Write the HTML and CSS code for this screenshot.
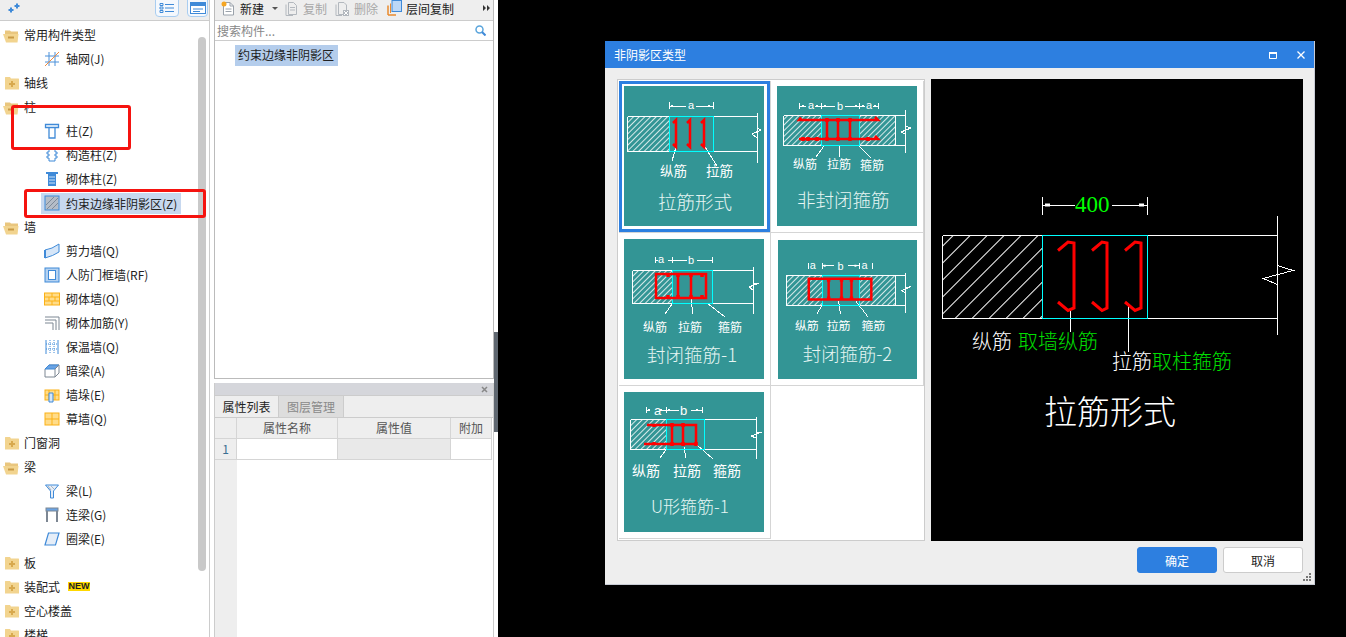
FILE: index.html
```html
<!DOCTYPE html>
<html lang="zh">
<head>
<meta charset="utf-8">
<title>非阴影区类型</title>
<link rel="stylesheet" href="styles.css">
</head>
<body>
<svg class="defs" width="0" height="0" aria-hidden="true">
  <defs>
    <pattern id="hs" width="4" height="4" patternUnits="userSpaceOnUse" patternTransform="rotate(-45)"><line x1="0" y1="0.5" x2="4" y2="0.5" stroke="#fff" stroke-width="0.8"/></pattern>
    <pattern id="hl" width="12" height="12" patternUnits="userSpaceOnUse" patternTransform="rotate(-45)"><line x1="0" y1="0.5" x2="12" y2="0.5" stroke="#fff" stroke-width="1.100"/></pattern>
    <symbol id="fc" viewBox="0 0 16 14"><path d="M1 3V1.500Q1 1 1.500 1H6L7 2.500H14.500Q15 2.500 15 3V13.500H1Z" fill="#f2d48f"/><path d="M8 5V11M5 8H11" stroke="#d8a94e" stroke-width="2"/></symbol>
    <symbol id="fo" viewBox="0 0 17 14"><path d="M2 3V1.500H7L8 2.500H15V5H2Z" fill="#e9c67e"/><path d="M0 5H15.500L14.500 13.500H3Z" fill="#f2d48f"/><path d="M5 8.500H11" stroke="#c99a45" stroke-width="2"/></symbol>
    <symbol id="i-grid" viewBox="0 0 16 16" fill="none"><path d="M1 5H15M1 11H15M5 1V15M11 1V15" stroke="#4a90d9"/><path d="M1 15L15 1" stroke="#f08a3c"/></symbol>
    <symbol id="i-col" viewBox="0 0 16 16" fill="none"><path d="M1.500 1.500H14.500V4.500H1.500ZM5 4.500V15H11V4.500" stroke="#3f8ad8" stroke-width="1.300"/></symbol>
    <symbol id="i-gz" viewBox="0 0 16 16" fill="none"><path d="M5 2H11V5H13V7H11V9H13V11H11V14H5V11H3V9H5V7H3V5H5Z" stroke="#3f8ad8"/></symbol>
    <symbol id="i-qt" viewBox="0 0 16 16"><path d="M2 1H14V3H12V15H4V3H2Z" fill="#3f8ad8"/><path d="M5 6H11M5 9H11M5 12H11" stroke="#cfe2f7"/></symbol>
    <symbol id="i-ys" viewBox="0 0 16 16"><rect x="1" y="1" width="14" height="14" fill="#b5bdc8" stroke="#3f8ad8"/><path d="M2 10L10 2M3 14L14 3M8 14L14 8" stroke="#7e8a99"/></symbol>
    <symbol id="i-jl" viewBox="0 0 16 16"><path d="M1 7Q8 6 15 1V9Q9 13 1 15Z" fill="#d6e6f8" stroke="#3f8ad8"/><path d="M1 7V15" stroke="#3f8ad8" stroke-width="2"/></symbol>
    <symbol id="i-rf" viewBox="0 0 16 16" fill="none"><rect x="1" y="1" width="14" height="14" fill="#b5d2f1" stroke="#3f8ad8"/><rect x="4.500" y="3.500" width="7" height="9" fill="#fff" stroke="#3f8ad8"/></symbol>
    <symbol id="i-brick" viewBox="0 0 16 16"><rect x="0.500" y="2" width="15" height="12" fill="#ffdc8a" stroke="#fbb116"/><path d="M1 6H15M1 10H15M8 2V6M5 6V10M11 6V10M8 10V14" stroke="#fbb116"/></symbol>
    <symbol id="i-jj" viewBox="0 0 16 16" fill="none"><path d="M1 2H15V15M1 5H12V15M1 8H9V15" stroke="#7d8793"/></symbol>
    <symbol id="i-bw" viewBox="0 0 16 16" fill="none"><path d="M2 1V15M14 1V15" stroke="#3f8ad8"/><path d="M6 1V15M10 1V15M2 5H14M2 10H14" stroke="#3f8ad8" stroke-dasharray="1 1"/></symbol>
    <symbol id="i-al" viewBox="0 0 16 16"><path d="M1 6L5 2H15V10L11 14H1Z" fill="#fff" stroke="#7d8793"/><path d="M1 6L5 2H15L11 6Z" fill="#6aa3e3" stroke="#3f8ad8"/><path d="M11 6V14M11 6L15 2" stroke="#7d8793"/></symbol>
    <symbol id="i-qd" viewBox="0 0 16 16"><rect x="1" y="3" width="14" height="10" fill="#ffdc8a" stroke="#fbb116"/><path d="M1 8H15M5 3V13M11 3V13" stroke="#fbb116"/><path d="M5 6H9V15H5Z" fill="#d6e6f8" stroke="#3f8ad8"/></symbol>
    <symbol id="i-mq" viewBox="0 0 16 16"><rect x="1" y="2" width="14" height="12" fill="#ffdc8a" stroke="#fbb116"/><path d="M1 8H15M8 2V14" stroke="#fbb116"/></symbol>
    <symbol id="i-l" viewBox="0 0 16 16"><path d="M1.500 2H14.500L9.500 8V15H6.500V8Z" fill="#e6eef8" stroke="#3f8ad8"/><path d="M4 3L7 7M7 3L10 6" stroke="#a9b3bf"/></symbol>
    <symbol id="i-ll" viewBox="0 0 16 16" fill="none"><rect x="2" y="1" width="12" height="3" fill="#6aa3e3" stroke="#7d8793"/><path d="M3 4V15M13 4V15" stroke="#7d8793" stroke-width="2"/></symbol>
    <symbol id="i-ql" viewBox="0 0 16 16"><path d="M4.500 2H15L11.500 14H1Z" fill="#e6eef8" stroke="#3f8ad8" stroke-width="1.200"/></symbol>
  </defs>
</svg>

<div class="workspace">
  <aside class="sidebar">
    <div class="side-bar-top">
      <svg class="spark" viewBox="0 0 12 10" width="12" height="10"><path d="M0.500 7H5.500M3 4.500V9.500M6.500 3H11.500M9 0.500V5.500" stroke="#3f8ad8" stroke-width="2"/></svg>
      <span class="view-btn"><svg viewBox="0 0 16 12" width="16" height="12" fill="none"><path d="M1 1.500H4V3.500H1ZM1 5H4V7H1ZM1 8.500H4V10.500H1ZM6 2.500H15M6 6H15M6 9.500H15" stroke="#3f8ad8"/></svg></span>
      <span class="view-btn"><svg viewBox="0 0 16 12" width="16" height="12"><rect x="0.500" y="0.500" width="15" height="11" fill="#fff" stroke="#3f8ad8"/><rect x="1" y="1" width="14" height="3" fill="#3f8ad8"/><path d="M3 7H13M3 9.500H10" stroke="#3f8ad8"/></svg></span>
    </div>
    <div class="tree">
      <div class="row"><svg class="folder-open"><use href="#fo"/></svg>常用构件类型</div>
      <div class="row leaf"><svg class="ico"><use href="#i-grid"/></svg>轴网(J)</div>
      <div class="row"><svg class="folder"><use href="#fc"/></svg>轴线</div>
      <div class="row"><svg class="folder-open"><use href="#fo"/></svg>柱</div>
      <div class="row leaf"><svg class="ico"><use href="#i-col"/></svg>柱(Z)</div>
      <div class="row leaf"><svg class="ico"><use href="#i-gz"/></svg>构造柱(Z)</div>
      <div class="row leaf"><svg class="ico"><use href="#i-qt"/></svg>砌体柱(Z)</div>
      <div class="row leaf"><span class="sel-row"><svg class="ico"><use href="#i-ys"/></svg>约束边缘非阴影区(Z)</span></div>
      <div class="row"><svg class="folder-open"><use href="#fo"/></svg>墙</div>
      <div class="row leaf"><svg class="ico"><use href="#i-jl"/></svg>剪力墙(Q)</div>
      <div class="row leaf"><svg class="ico"><use href="#i-rf"/></svg>人防门框墙(RF)</div>
      <div class="row leaf"><svg class="ico"><use href="#i-brick"/></svg>砌体墙(Q)</div>
      <div class="row leaf"><svg class="ico"><use href="#i-jj"/></svg>砌体加筋(Y)</div>
      <div class="row leaf"><svg class="ico"><use href="#i-bw"/></svg>保温墙(Q)</div>
      <div class="row leaf"><svg class="ico"><use href="#i-al"/></svg>暗梁(A)</div>
      <div class="row leaf"><svg class="ico"><use href="#i-qd"/></svg>墙垛(E)</div>
      <div class="row leaf"><svg class="ico"><use href="#i-mq"/></svg>幕墙(Q)</div>
      <div class="row"><svg class="folder"><use href="#fc"/></svg>门窗洞</div>
      <div class="row"><svg class="folder-open"><use href="#fo"/></svg>梁</div>
      <div class="row leaf"><svg class="ico"><use href="#i-l"/></svg>梁(L)</div>
      <div class="row leaf"><svg class="ico"><use href="#i-ll"/></svg>连梁(G)</div>
      <div class="row leaf"><svg class="ico"><use href="#i-ql"/></svg>圈梁(E)</div>
      <div class="row"><svg class="folder"><use href="#fc"/></svg>板</div>
      <div class="row"><svg class="folder"><use href="#fc"/></svg>装配式<span class="new">NEW</span></div>
      <div class="row"><svg class="folder"><use href="#fc"/></svg>空心楼盖</div>
      <div class="row"><svg class="folder"><use href="#fc"/></svg>楼梯</div>
    </div>
    <div class="scrollbar"></div>
    <div class="mark mark-a"></div>
    <div class="mark mark-b"></div>
  </aside>

  <section class="center">
    <div class="upper">
      <div class="toolbar">
        <span class="tool tool-new"><svg viewBox="0 0 14 15" width="14" height="15" fill="none"><path d="M2.500 1.500H9L12.500 5V14H2.500Z" fill="#fff" stroke="#9aa2ab"/><path d="M9 1.500V5H12.500M4.500 8H10.500M4.500 10.500H10.500" stroke="#9aa2ab"/><circle cx="3" cy="3" r="2.500" fill="#f5a623"/></svg>新建<i class="caret"></i></span>
        <span class="tool tool-off tool-copy"><svg viewBox="0 0 14 15" width="14" height="15" fill="none"><path d="M4.500 1.500H9.500L12.500 4.500V13.500H4.500ZM2 3.500V14.500H9M6 6.500H11M6 9H11" stroke="#b3b8be"/></svg>复制</span>
        <span class="tool tool-off tool-del"><svg viewBox="0 0 16 15" width="16" height="15" fill="none"><path d="M4.500 1.500H10L12.500 4V13.500H4.500ZM2 3.500V14.500H8" stroke="#b3b8be"/><rect x="9" y="9" width="6" height="6" fill="#b3b8be"/><path d="M10 10L14 14M14 10L10 14" stroke="#fff"/></svg>删除</span>
        <span class="tool tool-floor"><svg viewBox="0 0 15 16" width="15" height="16"><path d="M1 15V5.500M1 15H9" stroke="#e98a2e" stroke-width="1.500" fill="none"/><path d="M3.500 13V3.500" stroke="#e98a2e" fill="none"/><rect x="5" y="0.500" width="9.500" height="11" fill="#bcd8f7" stroke="#3f8ad8"/></svg>层间复制</span>
        <span class="more"><svg viewBox="0 0 7 6" width="7" height="6"><path d="M0 0L3 3L0 6ZM4 0L7 3L4 6Z" fill="#333"/></svg></span>
      </div>
      <div class="search">搜索构件...<svg viewBox="0 0 11 11" width="11" height="11" fill="none"><circle cx="4.500" cy="4.500" r="3.500" stroke="#5aa5dc" stroke-width="1.500"/><path d="M7 7L10.500 10.500" stroke="#3f8ad8" stroke-width="2"/></svg></div>
      <div class="list"><span class="list-item">约束边缘非阴影区</span></div>
    </div>
    <div class="lower">
      <div class="lower-head"><svg viewBox="0 0 7 7" width="7" height="7"><path d="M1 1L6 6M6 1L1 6" stroke="#888" stroke-width="1.500"/></svg></div>
      <div class="tabs"><span class="tab tab-on">属性列表</span><span class="tab">图层管理</span></div>
      <div class="props">
        <div class="pc ph"></div><div class="pc ph">属性名称</div><div class="pc ph">属性值</div><div class="pc ph">附加</div>
        <div class="pc ph num">1</div><div class="pc"></div><div class="pc pc-grey"></div><div class="pc"></div>
        <div class="gutter"></div>
      </div>
    </div>
  </section>
  <div class="split"><div class="split-grip"></div></div>
</div>

<div class="dialog">
  <header class="dlg-title">
    <span>非阴影区类型</span>
    <svg class="dlg-max" viewBox="0 0 8 7" width="8" height="7" fill="none"><path d="M0.500 1H7.500V6.500H0.500Z" stroke="#fff"/><path d="M0 1H8" stroke="#fff" stroke-width="2"/></svg>
    <svg class="dlg-x" viewBox="0 0 8 8" width="8" height="8"><path d="M0.500 0.500L7.500 7.500M7.500 0.500L0.500 7.500" stroke="#fff" stroke-width="1.300"/></svg>
  </header>
  <div class="dlg-main">
    <div class="types">
      <div class="cell cell-sel">
        <svg class="thumb" viewBox="0 0 140 140">
          <rect x="3.500" y="30.500" width="41.500" height="35" fill="url(#hs)"/>
          <path class="w" d="M3.500 30.500H133M3.500 65.500H133M3.500 30.500V65.500M133 27V77M133 42L137 44L128 48L133 52M45.500 16V23M89.500 16V23M45.500 20H62M72 20H89.500M52 61L48 75M81 61L93 80"/>
          <path class="arrow" d="M47 19H49V21H47ZM84 19H86V21H84Z"/>
          <rect class="cy" x="45.500" y="30.500" width="44" height="35"/>
          <path class="rd" d="M49 37L52 34V61L49 58M63 37L66 34V61L63 58M77 37L80 34V61L77 58"/>
          <text class="dim" x="64" y="23">a</text>
          <text class="lbl lbl-m" x="36" y="90">纵筋</text><text class="lbl lbl-m" x="82" y="90">拉筋</text>
          <text class="ttl" x="34" y="123">拉筋形式</text>
        </svg>
      </div>
      <div class="cell cell-b">
        <svg class="thumb" viewBox="0 0 140 140">
          <rect x="6.500" y="29.500" width="38" height="30" fill="url(#hs)"/><rect x="82" y="29.500" width="36" height="30" fill="url(#hs)"/>
          <path class="w" d="M6.500 29.500H128M6.500 59.500H128M6.500 29.500V59.500M118.500 29.500V59.500M128.500 24V67M128 40L134 42L124 46L128 48M22.500 17V23M44.500 17V23M82.500 17V23M101.500 17V23M22.500 20H29M38 20H44.500M44.500 20H58M68 20H82.500M82.500 20H88M96 20H101.500M47 60L39 71M62 60L63 71M82 60L94 72"/>
          <path class="arrow" d="M25 19H27V21H25ZM39 19H41V21H39ZM47 19H49V21H47ZM78 19H80V21H78ZM85 19H87V21H85ZM97 19H99V21H97Z"/>
          <rect class="cy" x="44.500" y="29.500" width="38" height="30"/>
          <path class="rd" d="M24 31.500L22 34H101L98 31M22 53H101L98 50M50 34V53M61 34V53M73 34V53"/>
          <path class="rj" d="M50 32V36M61 32V36M73 32V36M50 51V55M61 51V55M73 51V55M26 51V55M31 51V55M40 51V55M91 51V55"/>
          <text class="dim" x="31" y="23">a</text><text class="dim" x="60" y="24">b</text><text class="dim" x="89" y="23">a</text>
          <text class="lbl" x="16" y="83">纵筋</text><text class="lbl" x="50" y="83">拉筋</text><text class="lbl" x="83" y="84">箍筋</text>
          <text class="ttl" x="20" y="121">非封闭箍筋</text>
        </svg>
      </div>
      <div class="cell cell-c">
        <svg class="thumb" viewBox="0 0 140 140">
          <rect x="8.500" y="31.500" width="39.500" height="33" fill="url(#hs)"/>
          <path class="w" d="M8.500 31.500H129M8.500 64.500H129M8.500 31.500V64.500M129.500 28V75M129 45L135 44L125 48L129 51M31.500 18V24M48.500 18V24M88.500 18V24M31.500 21H34M44 21H48.500M48.500 21H63M73 21H88.500M48 65L41 75M67 60L69 75M83 64L101 78"/>
          <rect class="cy" x="48.500" y="31.500" width="40" height="33"/>
          <path class="rb" d="M32 35H82V59H32ZM54 35V59M67 35V59"/>
          <path class="rj" d="M44 35V38M54 35V38M67 35V38M78 35V38M44 56V59M54 56V59M67 56V59M78 56V59"/>
          <text class="dim" x="34" y="24">a</text><text class="dim" x="64" y="25">b</text>
          <text class="lbl" x="19" y="93">纵筋</text><text class="lbl" x="54" y="93">拉筋</text><text class="lbl" x="94" y="93">箍筋</text>
          <text class="ttl" x="23" y="123">封闭箍筋-1</text>
        </svg>
      </div>
      <div class="cell cell-d">
        <svg class="thumb thumb-small" viewBox="0 0 140 140">
          <rect x="8.500" y="35.500" width="36" height="30" fill="url(#hs)"/><rect x="82" y="35.500" width="36" height="30" fill="url(#hs)"/>
          <path class="w" d="M8.500 35.500H128M8.500 65.500H128M8.500 35.500V65.500M118.500 35.500V65.500M128.500 33V74M128 48L134 47L124 51L128 53M30.500 23V29M44.500 23V29M82.500 23V29M95.500 23V29M44.500 26H56M70 26H82.500M44 66L39 75M61 61L63 75M78 61L91 78"/>
          <path class="arrow" d="M46 25H48V27H46ZM77 25H79V27H77Z"/>
          <rect class="cy" x="44.500" y="35.500" width="38" height="30"/>
          <path class="rb" d="M31 39H94V60H31ZM51 39V60M64 39V60M74 39V60"/>
          <path class="rj" d="M51 39V42M64 39V42M74 39V42M51 57V60M64 57V60M74 57V60"/>
          <text class="dim" x="32" y="29">a</text><text class="dim" x="60" y="30">b</text><text class="dim" x="84" y="29">a</text>
          <text class="lbl" x="17" y="91">纵筋</text><text class="lbl" x="49" y="91">拉筋</text><text class="lbl" x="84" y="91">箍筋</text>
          <text class="ttl" x="25" y="122">封闭箍筋-2</text>
        </svg>
      </div>
      <div class="cell cell-e">
        <svg class="thumb" viewBox="0 0 140 140">
          <rect x="6.500" y="27.500" width="35.500" height="30" fill="url(#hs)"/>
          <path class="w" d="M6.500 27.500H132M6.500 57.500H132M6.500 27.500V57.500M132.500 25V67M132 40L138 40L127 44L132 46M22.500 15V21M42.500 15V21M78.500 15V21M22.500 18H26M36 18H42.500M42.500 18H55M67 18H78.500M42 58L36 66M60 55L62 66M73 53L89 67"/>
          <path class="arrow" d="M24 17H26V19H24ZM36 17H38V19H36ZM44 17H46V19H44ZM72 17H74V19H72Z"/>
          <rect class="cy" x="42.500" y="27.500" width="38" height="30"/>
          <path class="rb" d="M23 33H72V52H20M48 33V52M59 33V52"/>
          <path class="rj" d="M30 33V35M48 31V35M59 31V35M30 50V52M48 50V54M59 50V54M72 50V54"/>
          <text class="dim dim-l" x="30" y="23">a</text><text class="dim dim-l" x="56" y="23">b</text>
          <text class="lbl lbl-big" x="8" y="84">纵筋</text><text class="lbl lbl-big" x="49" y="84">拉筋</text><text class="lbl lbl-big" x="89" y="84">箍筋</text>
          <text class="ttl ttl-u" x="27" y="121">U形箍筋-1</text>
        </svg>
      </div>
      <div class="cell cell-f"></div>
    </div>
    <div class="preview">
      <svg viewBox="931 79 372 462" width="372" height="462">
        <rect x="942.500" y="235.500" width="100" height="83" fill="url(#hl)"/>
        <path class="w" d="M942.500 235.500H1277M942.500 318.500H1277M942.500 235.500V318.500M1277.500 216V335M1277.500 265.500L1293 270.500L1263 278.500L1277.500 284.500M1042.500 197V215M1147.500 197V215M1043 205H1075M1112 205H1147M1070.500 311V332M1128.500 305V352"/>
        <path class="arrow" d="M1045 203.500H1050V206.500H1045ZM1139 203.500H1144V206.500H1139Z"/>
        <rect class="cy" x="1042.500" y="235.500" width="105" height="83"/>
        <path class="rl" d="M1058 250.500L1068 242L1074 243V308L1068 310.500L1058 302M1092 250.500L1102 242L1107 243V308L1102 310.500L1092 302M1125 250.500L1135 242L1141 243V308L1135 310.500L1125 302"/>
        <text class="g400" x="1075" y="212">400</text>
        <text class="pv" x="972" y="349">纵筋</text><text class="pv pv-g" x="1018" y="349">取墙纵筋</text>
        <text class="pv" x="1112" y="369">拉筋</text><text class="pv pv-g" x="1152" y="369">取柱箍筋</text>
        <text class="pv pv-ttl" x="1044" y="424">拉筋形式</text>
      </svg>
    </div>
  </div>
  <footer class="dlg-foot">
    <button class="btn btn-ok">确定</button>
    <button class="btn">取消</button>
  </footer>
  <svg class="grip" viewBox="0 0 8 8" width="8" height="8"><path d="M6 0H8V2H6ZM3 3H5V5H3ZM6 3H8V5H6ZM0 6H2V8H0ZM3 6H5V8H3ZM6 6H8V8H6Z" fill="#777"/></svg>
</div>
</body>
</html>
```
FILE: styles.css
```css
* { box-sizing: border-box; }
html, body { margin: 0; padding: 0; }
body {
  width: 1346px;
  height: 637px;
  overflow: hidden;
  background: #000;
  font: 12px "Noto Sans CJK SC", "Liberation Sans", sans-serif;
  color: #222;
  position: relative;
}
.defs { position: absolute; }

.workspace { display: flex; width: 498px; height: 637px; background: #fff; }

.sidebar {
  position: relative;
  width: 210px;
  flex: none;
  border-right: 1px solid #ccc;
  overflow: hidden;
}
.side-bar-top {
  height: 21px;
  background: #eee;
  border-bottom: 1px solid #ccc;
  display: flex;
  align-items: flex-start;
  gap: 8px;
  padding-right: 1px;
}
.spark { margin: 3px auto 0 8px; }
.view-btn {
  width: 24px;
  height: 18px;
  margin-top: -1px;
  border: 1px solid #a9cdf0;
  border-radius: 0 0 4px 4px;
  background: #f4f8fd;
  display: flex;
  align-items: center;
  justify-content: center;
}
.view-btn + .view-btn { width: 21px; }
.tree { padding-top: 1px; }
.row {
  height: 24px;
  display: flex;
  align-items: center;
  padding-left: 24px;
  position: relative;
  white-space: nowrap;
}
.leaf { padding-left: 66px; }
.folder { position: absolute; left: 4px; top: 6px; width: 16px; height: 14px; }
.folder-open { position: absolute; left: 3px; top: 7px; width: 17px; height: 14px; }
.ico { position: absolute; left: 44px; top: 5px; width: 16px; height: 16px; }
.sel-row {
  position: absolute;
  left: 41px;
  top: 3px;
  width: 140px;
  height: 21px;
  background: #c7d8ef;
  display: flex;
  align-items: center;
  padding: 0 0 1px 25px;
}
.sel-row .ico { left: 3px; top: 2px; }
.new {
  margin-left: 8px;
  height: 9px;
  width: 22px;
  background: #ffd800;
  font: bold 9px/9px "Liberation Sans", sans-serif;
  text-align: center;
  color: #222;
}
.scrollbar {
  position: absolute;
  left: 198px;
  top: 37px;
  width: 8px;
  height: 534px;
  border-radius: 4px;
  background: #c9c9c9;
}
.mark { position: absolute; border: 3px solid #f5130f; border-radius: 3px; }
.mark-a { left: 11px; top: 105px; width: 120px; height: 45px; }
.mark-b { left: 24px; top: 189px; width: 182px; height: 29px; }

.center {
  width: 280px;
  margin-left: 4px;
  flex: none;
  display: flex;
  flex-direction: column;
}
.upper {
  height: 379px;
  display: flex;
  flex-direction: column;
  border: 1px solid #bbb;
  border-top: 0;
}
.toolbar {
  height: 21px;
  background: #eee;
  border-bottom: 1px solid #ccc;
  position: relative;
  flex: none;
}
.tool { position: absolute; top: 0; display: flex; align-items: center; height: 16px; white-space: nowrap; }
.tool-new { left: 6px; gap: 5px; color: #222; }
.tool-copy { left: 69px; gap: 5px; }
.tool-del { left: 119px; gap: 4px; }
.tool-floor { left: 172px; gap: 4px; }
.tool-off { color: #a8a8a8; }
.caret {
  margin-left: 3px;
  border: 3px solid transparent;
  border-top: 3px solid #555;
  border-bottom: 0;
}
.more { position: absolute; left: 268px; top: 5px; display: flex; }
.search {
  height: 20px;
  flex: none;
  border-bottom: 1px solid #ccc;
  padding: 0 7px 0 2px;
  display: flex;
  align-items: center;
  justify-content: space-between;
  color: #888;
}
.list { flex: 1; padding: 4px 0 0 20px; }
.list-item {
  display: block;
  width: 103px;
  height: 21px;
  line-height: 20px;
  padding: 0 3px;
  background: #b4cdec;
  color: #222;
}

.lower {
  margin-top: 4px;
  flex: 1;
  display: flex;
  flex-direction: column;
  border-left: 1px solid #ccc;
  border-right: 1px solid #ccc;
  min-height: 0;
}
.lower-head {
  height: 12px;
  background: #d5d6db;
  display: flex;
  align-items: center;
  justify-content: flex-end;
  padding-right: 5px;
  flex: none;
}
.tabs {
  height: 23px;
  flex: none;
  background: #eee;
  border-bottom: 1px solid #ccc;
  border-top: 1px solid #ccc;
  display: flex;
}
.tab {
  width: 65px;
  text-align: center;
  line-height: 21px;
  color: #8a8a8a;
  background: #ddd;
  border-right: 1px solid #ccc;
}
.tab-on { width: 64px; background: #eee; color: #222; border-right: 1px solid #ccc; }
.props {
  flex: 1;
  display: grid;
  grid-template-columns: 22px 101px 113px 41px;
  grid-template-rows: 21px 21px 1fr;
  align-content: start;
}
.pc {
  border-right: 1px solid #d5d5d5;
  border-bottom: 1px solid #d5d5d5;
  text-align: center;
  line-height: 20px;
  color: #555;
}
.ph { background: #eee; }
.num { color: #3a6f92; }
.pc-grey { background: #e9e9e9; }
.gutter { background: #eee; grid-column: 1; }

.split { width: 4px; flex: none; }
.split-grip { margin-top: 332px; height: 100px; background: #5f6770; }

.dialog {
  position: absolute;
  left: 605px;
  top: 41px;
  width: 710px;
  height: 544px;
  background: #eee;
  border-right: 1px solid #c8ccd5;
  border-bottom: 1px solid #c8ccd5;
  display: flex;
  flex-direction: column;
}
.dlg-title {
  height: 27px;
  flex: none;
  background: #2d7fe0;
  color: #fff;
  display: flex;
  align-items: center;
  padding-left: 9px;
  position: relative;
}
.dlg-max { position: absolute; left: 664px; top: 11px; }
.dlg-x { position: absolute; left: 692px; top: 10px; }
.dlg-main { display: flex; gap: 6px; margin: 11px 0 0 12px; }
.types {
  width: 308px;
  height: 462px;
  padding: 1px;
  background: #fff;
  border: 1px solid #ccc;
  display: grid;
  grid-template-columns: 152px 153px;
  grid-template-rows: 152px 153px 153px;
  flex: none;
}
.cell { border-right: 1px solid #d5d5d5; border-bottom: 1px solid #d5d5d5; padding: 6px 0 0 5px; }
.cell-sel { padding: 5px 0 0 5px; box-shadow: inset 0 0 0 3px #2d7fe0; }
.cell-b { padding: 5px 0 0 6px; }
.cell-d { padding: 7px 0 0 7px; }
.cell-f { border: 0; }
.thumb { display: block; width: 140px; height: 140px; background: #339595; }
.thumb-small { width: 139px; height: 139px; }

.w { fill: none; stroke: #fff; stroke-width: 1; shape-rendering: crispEdges; }
.cy { fill: none; stroke: #0ff; stroke-width: 1; shape-rendering: crispEdges; }
.rd { fill: none; stroke: #f00; stroke-width: 2.500; }
.rb { fill: none; stroke: #f00; stroke-width: 2.500; }
.rj { fill: none; stroke: #f00; stroke-width: 3.500; }
.rl { fill: none; stroke: #f00; stroke-width: 3; }
.arrow { fill: #fff; }
.dim { fill: #fff; font: 11px "Liberation Sans", sans-serif; }
.dim-l { font-size: 13px; }
.lbl { fill: #fff; font-size: 12px; }
.lbl-m { font-size: 13.500px; }
.lbl-big { font-size: 14px; }
.ttl { fill: #e6f5f3; font-size: 18.500px; font-weight: 300; }
.ttl-u { font-size: 17px; }
.preview { width: 372px; height: 462px; background: #000; flex: none; }
.preview svg { display: block; }
.g400 { fill: #0f0; font: 23px "Liberation Serif", serif; }
.pv { fill: #fff; font-size: 20px; font-weight: 300; }
.pv-g { fill: #00e000; }
.pv-ttl { font-size: 33px; }

.dlg-foot {
  display: flex;
  justify-content: flex-end;
  gap: 6px;
  margin-top: 6px;
  padding-right: 11px;
}
.btn {
  width: 80px;
  height: 26px;
  padding: 0;
  border: 1px solid #ccc;
  border-radius: 3px;
  background: #fff;
  color: #222;
  font: 12px "Noto Sans CJK SC", "Liberation Sans", sans-serif;
}
.btn-ok { background: #2d7fe0; border-color: #2d7fe0; color: #fff; }
.grip { position: absolute; right: 3px; bottom: 3px; }
```
